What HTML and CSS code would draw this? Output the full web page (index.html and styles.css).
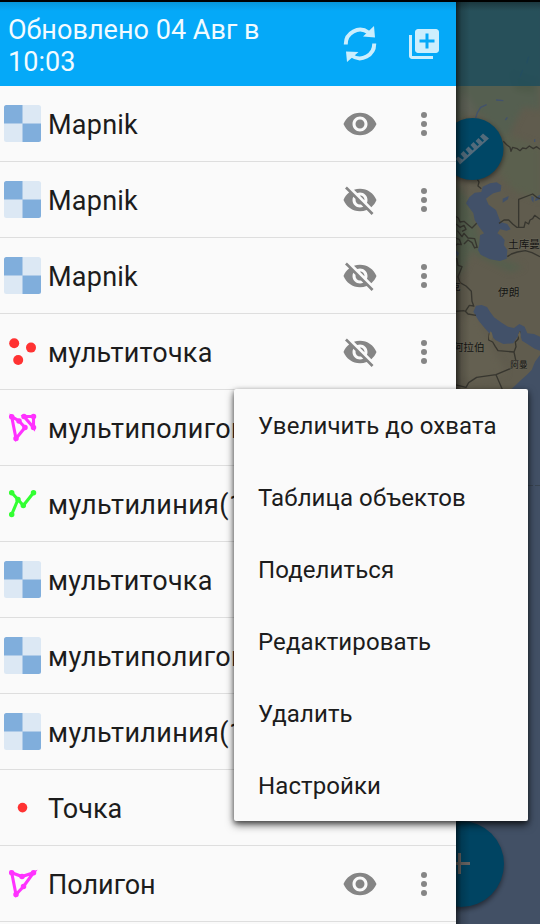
FILE: index.html
```html
<!DOCTYPE html>
<html lang="ru">
<head>
<meta charset="utf-8">
<title>Слои карты</title>
<link rel="stylesheet" href="styles.css">
</head>
<body>
<svg width="0" height="0" class="defs">
  <symbol id="tiles" viewBox="0 0 38 38"><rect y="0" width="37" height="37" rx="2.500" fill="#dce8f4"/><path d="M2.500 0H18.500V18.500H0V2.500Q0 0 2.500 0zM18.500 18.500H37V34.500Q37 37 34.500 37H18.500z" fill="#80aedc"/><path d="M18.500 0V37M0 18.500H37" stroke="#afcbe8" stroke-width="1"/></symbol>
  <symbol id="eye" viewBox="0 0 24 24"><path d="M12 4.500C7 4.500 2.730 7.610 1 12c1.730 4.390 6 7.500 11 7.500s9.270-3.110 11-7.500c-1.730-4.390-6-7.500-11-7.500zM12 17c-2.760 0-5-2.240-5-5s2.240-5 5-5 5 2.240 5 5-2.240 5-5 5zm0-8c-1.660 0-3 1.340-3 3s1.340 3 3 3 3-1.340 3-3-1.340-3-3-3z"/></symbol>
  <symbol id="eye-off" viewBox="0 0 24 24"><path d="M12 7c2.760 0 5 2.240 5 5 0 .65-.13 1.260-.36 1.830l2.920 2.920c1.510-1.260 2.700-2.890 3.430-4.750-1.730-4.390-6-7.500-11-7.500-1.400 0-2.740.25-3.980.7l2.160 2.160C10.740 7.130 11.350 7 12 7zM2 4.270l2.280 2.280.46.46C3.080 8.300 1.780 10.020 1 12c1.730 4.390 6 7.500 11 7.500 1.550 0 3.030-.3 4.380-.84l.42.42L19.730 22 21 20.730 3.270 3 2 4.270zM7.530 9.800l1.550 1.550c-.05.21-.08.43-.08.650 0 1.660 1.340 3 3 3 .22 0 .44-.03.650-.08l1.550 1.550c-.67.33-1.410.53-2.200.53-2.760 0-5-2.240-5-5 0-.79.2-1.530.53-2.200zm4.310-.78l3.150 3.150.02-.16c0-1.660-1.340-3-3-3l-.17.01z"/></symbol>
  <symbol id="more" viewBox="0 0 24 24"><circle cx="12" cy="6" r="2"/><circle cx="12" cy="12" r="2"/><circle cx="12" cy="18" r="2"/></symbol>
</svg>

<svg class="map" viewBox="0 0 540 924" width="540" height="924">
  <defs>
    <filter id="soft" x="-20%" y="-20%" width="140%" height="140%" color-interpolation-filters="sRGB"><feGaussianBlur stdDeviation="9"/></filter>
    <filter id="shade" x="-30%" y="-30%" width="160%" height="160%"><feGaussianBlur stdDeviation="2.500"/></filter>
    <linearGradient id="edge"><stop offset="0" stop-opacity=".55"/><stop offset=".4" stop-opacity=".15"/><stop offset="1" stop-opacity="0"/></linearGradient>
    <linearGradient id="top" x2="0" y2="1"><stop offset="0" stop-opacity=".3"/><stop offset="1" stop-opacity="0"/></linearGradient>
  </defs>
  <rect width="540" height="924" fill="#425065"/>
  <g transform="translate(440 90) scale(.33333)">
    <path d="M0-270H300V795L285 815 275 840 260 855 243 870 222 890 200 910H0z" fill="#605c4e"/>
    <g filter="url(#soft)">
      <path d="M40-270H300V60L250 50 225 95 210 130 190 150 130 80 90 60 40 110z" fill="#555f50"/>
      <path d="M190 130L300 170V330L220 300 180 250z" fill="#5b604e"/>
      <path d="M40 270L85 330 130 480 190 510 250 530 210 545 120 500 95 480 70 540 40 560z" fill="#545f4d"/>
      <path d="M70 0L110 60 95 80 50 60z" fill="#5d6055"/>
      <path d="M210-60L290-30 280 10 225 0z" fill="#4e5a49"/>
      <path d="M48 690L110 670 160 780 200 850 110 870 48 860z" fill="#646051"/>
    </g>
    <g fill="#425169">
      <path d="M78 340L88 322 104 308 124 306 128 290 150 280 170 277 184 286 182 304 160 310 148 318 138 326 146 344 168 360 177 384 182 396 202 402 212 418 200 422 180 418 172 430 184 438 194 450 192 466 202 480 200 506 180 513 150 508 122 494 114 480 118 462 120 436 132 430 118 412 104 390 100 370z"/>
      <path d="M100 665L108 647 125 645 141 651 150 665 162 682 185 698 204 710 222 714 238 702 254 710 262 730 282 732 300 740V782L284 776 262 762 246 752 240 732 230 744 220 760 190 762 166 750 148 730 132 712 116 692z"/>
      <path d="M45 478L57 490 52 500z"/>
      <path d="M274 318L282 322 280 338 274 330zM288 322L300 314V328L284 334zM188 326L206 318 204 328 188 338z"/>
    </g>
    <path d="M140 44L122 52 112 68 107 84M168 30L190 32M284 148V156M196 90L202 82M240-40L248-60M260-80L266-100" fill="none" stroke="#42526c" stroke-width="4"/>
    <g fill="none" stroke="#37362f" stroke-width="4" stroke-linejoin="round">
      <path d="M190 154L200 164 210 172 213 184 218 172 232 176 240 182 248 174 258 176 268 168 280 176 290 170 300 178"/>
      <path d="M112 268L117 276 114 288 124 296"/>
      <path d="M177 400L192 390 206 390 218 402 230 412H252L256 396 266 402 270 390 278 386 284 376 300 388M236 411V328L278 312 290 322 300 326"/>
      <path d="M202 500L214 492 232 486 256 482 276 488 300 500"/>
      <path d="M45 378L55 384 60 396 72 394 84 404 96 414 110 400M48 402L60 412 72 406 78 418 66 424M52 422L66 440 72 430 84 444 104 446 112 474M45 444L58 448 64 464 52 462 45 468M72 462L84 450 96 458 104 474 112 470"/>
      <path d="M50 504L54 526 66 530 54 560 60 578 78 588 94 604 96 634 102 650M102 648L88 646 76 664 84 672 108 676M45 664L74 662"/>
      <path d="M148 730L146 750 158 756 166 770 174 782 222 786 228 770 226 756 234 748 240 724M222 786L228 814 216 834 168 854 110 862 86 878 78 892 45 884M168 854L190 905"/>
    </g>
    <path d="M152 724Q145 732 148 748Q154 756 158 742Q159 730 152 724M234 734L240 722 242 736 238 746z" fill="#6a634e"/>
    <g class="places">
      <text x="204" y="473" font-size="32">土库曼</text>
      <text x="174" y="617" font-size="32">伊朗</text>
      <text x="32" y="600" font-size="29">克</text>
      <text x="38" y="782" font-size="32">阿拉伯</text>
      <text x="211" y="835" font-size="26">阿曼</text>
    </g>
  </g>
  <path d="M528 485.500H540" stroke="#38434f" stroke-dasharray="5 2"/>
  <rect y="2" width="540" height="84" fill="#1c4c5c" opacity=".8"/>
  <rect y="2" width="540" height="9" fill="url(#top)"/>
  <g filter="url(#shade)" opacity=".45"><circle cx="473" cy="151" r="31"/><circle cx="461" cy="867" r="43"/></g>
  <circle cx="472.500" cy="149" r="31" fill="#004766"/>
  <circle cx="461" cy="864" r="43" fill="#004462"/>
  <path d="M456 159L460 164.500 489 138.500 483 133.500 480 136.500 484 140.500 482.500 142 478.500 138 475.500 141 479 144.500 477.500 146 473.500 142 470.500 145 474 149 472.500 150.500 468.500 146.500 465.500 149.500 469 153.500 467.500 155 463.500 151 460.500 154 464 158 462.500 159.500 458 156.500z" fill="#536b7b"/>
  <path d="M449 863.500H470M459.500 853V874" stroke="#666361" stroke-width="3"/>
  <rect x="456" width="14" height="924" fill="url(#edge)"/>
</svg>

<main class="drawer">
  <header class="bar">
    <h1>Обновлено 04 Авг в<br>10:03</h1>
    <svg class="sync" viewBox="0 0 36 36" width="36" height="36"><path d="M3.800 18.500A14.300 14.300 0 0 1 26.500 6.500M32.200 17.500A14.300 14.300 0 0 1 9.500 29.500" fill="none" stroke="#cceefd" stroke-width="4"/><path d="M32 0L33 11.500 21 10.500zM5 36L4 25.500 16.500 26z" fill="#cceefd"/></svg>
    <svg class="add" viewBox="0 0 24 24" width="36" height="36"><path d="M4 6H2v14c0 1.100.9 2 2 2h14v-2H4V6zm16-4H8c-1.100 0-2 .9-2 2v12c0 1.100.9 2 2 2h12c1.100 0 2-.9 2-2V4c0-1.100-.9-2-2-2zm-1 9h-4v4h-2v-4H9V9h4V5h2v4h4v2z" fill="#cceefd"/></svg>
  </header>
  <ul class="layers">
    <li><svg class="thumb"><use href="#tiles"/></svg><span>Mapnik</span><svg class="act"><use href="#eye"/></svg><svg class="act"><use href="#more"/></svg></li>
    <li><svg class="thumb"><use href="#tiles"/></svg><span>Mapnik</span><svg class="act"><use href="#eye-off"/></svg><svg class="act"><use href="#more"/></svg></li>
    <li><svg class="thumb"><use href="#tiles"/></svg><span>Mapnik</span><svg class="act"><use href="#eye-off"/></svg><svg class="act"><use href="#more"/></svg></li>
    <li><svg class="thumb" viewBox="0 0 38 38"><g fill="#ff3232"><circle cx="10.200" cy="10.200" r="5"/><circle cx="27" cy="14.600" r="5"/><circle cx="14.200" cy="27" r="5"/></g></svg><span>мультиточка</span><svg class="act"><use href="#eye-off"/></svg><svg class="act"><use href="#more"/></svg></li>
    <li><svg class="thumb" viewBox="0 0 38 38"><g class="poly"><path d="M7.700 7.700L15 12 21 18.500 12 29.500zM20 7.500H29.500V18.500z"/><path class="nodes" d="M7.700 7.700h0M15 12h0M21 18.500h0M12 29.500h0M20 7.500h0M29.500 7.500h0M29.500 18.500h0"/></g></svg><span class="wide">мультиполигон</span></li>
    <li><svg class="thumb" viewBox="0 0 38 38"><g class="line"><path d="M7.700 7.700L14 14.500 19.300 20.500 29.500 7.700M14 14.500L7.700 29.500"/><path class="nodes" d="M7.700 7.700h0M14 14.500h0M19.300 20.500h0M29.500 7.700h0M7.700 29.500h0"/></g></svg><span class="wide">мультилиния(1)</span></li>
    <li><svg class="thumb"><use href="#tiles"/></svg><span>мультиточка</span></li>
    <li><svg class="thumb"><use href="#tiles"/></svg><span class="wide">мультиполигон</span></li>
    <li><svg class="thumb"><use href="#tiles"/></svg><span class="wide">мультилиния(1)</span></li>
    <li><svg class="thumb" viewBox="0 0 38 38"><circle cx="18.500" cy="18.600" r="4.800" fill="#ff3232"/></svg><span class="tight">Точка</span></li>
    <li><svg class="thumb" viewBox="0 0 38 38"><g class="poly"><path d="M7.700 7.700L18 11.500 29.500 7.700 19.500 21.500 12 29.500z"/><path class="nodes" d="M7.700 7.700h0M18 11.500h0M29.500 7.700h0M19.500 21.500h0M12 29.500h0"/></g></svg><span class="tight">Полигон</span><svg class="act"><use href="#eye"/></svg><svg class="act"><use href="#more"/></svg></li>
  </ul>
</main>

<ul class="menu">
  <li>Увеличить до охвата</li>
  <li>Таблица объектов</li>
  <li>Поделиться</li>
  <li>Редактировать</li>
  <li>Удалить</li>
  <li>Настройки</li>
</ul>
</body>
</html>
```
FILE: styles.css
```css
* { box-sizing: border-box; }
body {
  margin: 0;
  width: 540px;
  height: 924px;
  overflow: hidden;
  position: relative;
  border-top: 2px solid #000;
  font-family: Roboto, "Noto Sans", sans-serif;
  color: #1c1c1c;
}
ul { list-style: none; margin: 0; padding: 0; }
svg { flex: none; display: block; }
.defs, .map { position: absolute; left: 0; }
.map { top: -2px; clip-path: inset(2px 0 0); }
.places text {
  font-family: "Noto Sans CJK SC", sans-serif;
  fill: #141412;
  stroke: #686557;
  stroke-width: 3px;
  paint-order: stroke;
}
.drawer {
  position: relative;
  width: 456px;
  height: 922px;
  background: #fafafa;
  overflow: hidden;
}
.bar {
  display: flex;
  align-items: center;
  height: 84px;
  padding: 0 14px 0 8px;
  color: #f2fbff;
  background: linear-gradient(#0796d9, #05a9f8 9px);
}
.bar h1 {
  flex: 1;
  margin: 0;
  padding-top: 4px;
  font-size: 27px;
  line-height: 32px;
  font-weight: 400;
  letter-spacing: .04px;
}
.add { margin-left: 28px; }
.layers li {
  display: flex;
  align-items: center;
  height: 76px;
  padding: 0 14px 0 4px;
  border-bottom: 1px solid #dedede;
}
.layers span {
  flex: 1;
  margin-left: 6px;
  padding-top: 2px;
  font-size: 27px;
  line-height: 32px;
  letter-spacing: .24px;
  white-space: nowrap;
}
.layers .wide { letter-spacing: .36px; }
.layers .tight { letter-spacing: 0; }
.thumb { width: 38px; height: 38px; }
.act { width: 36px; height: 36px; fill: #858585; }
.act + .act { margin-left: 28px; }
.poly, .line {
  fill: none;
  stroke: #ff32ff;
  stroke-width: 3.1;
  stroke-linecap: round;
}
.line { stroke: #32ff32; }
.nodes { stroke-width: 5.5; }
.menu {
  position: absolute;
  left: 234px;
  top: 387px;
  width: 294px;
  height: 432px;
  border-radius: 2px;
  background: #fafafa;
  box-shadow: 0 4px 8px rgba(0, 0, 0, .55), 0 2px 5px rgba(0, 0, 0, .45);
}
.menu li {
  height: 72px;
  padding: 1px 0 0 24px;
  font-size: 24px;
  line-height: 72px;
  letter-spacing: .1px;
}
```
